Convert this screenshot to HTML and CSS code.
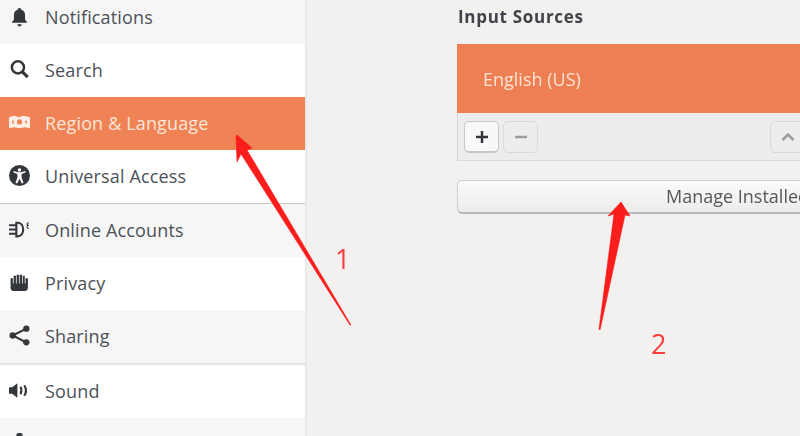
FILE: index.html
```html
<!DOCTYPE html>
<html lang="en">
<head>
<meta charset="utf-8">
<title>Region &amp; Language</title>
<link rel="stylesheet" href="styles.css">
</head>
<body>
<div class="window">
  <nav class="sidebar">
    <div class="row first alt">
      <svg class="icon" viewBox="0 0 20 20"><path d="M10 1c.9 0 1.500.6 1.500 1.400 2.900.8 3.800 3 3.800 5.800v3.800l2.200 3H2.500l2.200-3V8.200c0-2.800.9-5 3.800-5.800C8.500 1.600 9.100 1 10 1zM8 16.500h4c0 1.300-.9 2-2 2s-2-.7-2-2z"/></svg>
      <span>Notifications</span>
    </div>
    <div class="row">
      <svg class="icon" viewBox="0 0 20 20"><circle class="line thickish" cx="8.500" cy="8" r="5.800"/><path class="line thick" d="M12.800 12.300l5 5"/></svg>
      <span>Search</span>
    </div>
    <div class="row active">
      <svg class="icon" viewBox="0 0 20 20"><path class="flag" fill-rule="evenodd" d="M0 5l5-1.500 4 1.500 5-1.500L20 5v10.500l-5-1-5 1-5-1-5 1zM7.500 9.500a2.500 2.500 0 1 0 5 0 2.500 2.500 0 1 0-5 0zM3 8v3h1.500V8zM15.500 8v3H17V8z"/></svg>
      <span>Region &amp; Language</span>
    </div>
    <div class="row">
      <svg class="icon" viewBox="0 0 20 20"><path fill-rule="evenodd" d="M10 0a10 10 0 1 1 0 20 10 10 0 0 1 0-20zM10 3a1.700 1.700 0 1 0 0 3.400A1.700 1.700 0 0 0 10 3zM4 7l4 1.500V12l-1.800 5 1.600.5L10 13l2.200 4.500 1.600-.5L12 12V8.500L16 7l-.5-1.300-4 1.300h-3l-4-1.300z"/></svg>
      <span>Universal Access</span>
    </div>
    <div class="divider"></div>
    <div class="row alt">
      <svg class="icon" viewBox="0 0 20 20"><path class="line" d="M0 6h6M0 10h6M0 14h6M7 3.500h1c3.500 0 5.500 3 5.500 6.500s-2 6.500-5.500 6.500H7zM14 10h-1"/><path class="line thin" d="M19 3.500c-2.500 0-2.500 2.500 0 2.500M19 9c-2.500 0-2.500-3 0-3"/></svg>
      <span>Online Accounts</span>
    </div>
    <div class="row">
      <svg class="icon" viewBox="0 0 20 20"><path d="M1.500 6h2.200v5h.7V3.500h2.200V11h.7V2.500h2.200V11h.7V2.500h2.200V11h.7V3.500H15V11h.7V6H18v9c0 1.800-1 3-3 3H4.500c-2 0-3-1.200-3-3z"/></svg>
      <span>Privacy</span>
    </div>
    <div class="row alt">
      <svg class="icon" viewBox="0 0 20 20"><path class="line" d="M16.500 3.500L3.500 10l13 6.500"/><circle cx="16.500" cy="3.500" r="3"/><circle cx="3.500" cy="10" r="3"/><circle cx="16.500" cy="16.500" r="3"/></svg>
      <span>Sharing</span>
    </div>
    <div class="divider thick-divider"></div>
    <div class="row">
      <svg class="icon" viewBox="0 0 20 20"><path d="M0 7h3l5-4v14l-5-4H0z"/><path class="line" d="M11 6.500c1.200 2.300 1.200 4.700 0 7M14.500 5c2 3 2 7 0 10"/></svg>
      <span>Sound</span>
    </div>
    <div class="row alt last">
      <svg class="icon" viewBox="0 0 20 20"><rect x="7" y="1" width="6" height="18" rx="2"/></svg>
    </div>
  </nav>
  <main class="content">
    <h2 class="heading">Input Sources</h2>
    <div class="sources">
      <div class="source">English (US)</div>
      <div class="toolbar">
        <button class="tool raised"><svg viewBox="0 0 14 14"><path d="M7 1v12M1 7h12"/></svg></button>
        <button class="tool"><svg viewBox="0 0 14 14"><path class="muted" d="M1 7h12"/></svg></button>
        <button class="tool up"><svg viewBox="0 0 14 14"><path class="muted" d="M1.500 10L7 4.500l5.500 5.500"/></svg></button>
      </div>
    </div>
    <button class="manage">Manage Installed Languages</button>
  </main>
</div>
<svg class="notes" viewBox="0 0 800 436">
  <path d="M236 136l1-1 15 13-5 2 104 175-1 0-109-171-4 8z"/>
  <path d="M621 202l9 14-5-1-25 115-1-1 15-115-6 2z"/>
  <text x="335" y="269">1</text>
  <text x="651" y="354">2</text>
</svg>
</body>
</html>
```
FILE: styles.css
```css
* { box-sizing: border-box; }
html, body { margin: 0; padding: 0; width: 800px; height: 436px; overflow: hidden; background: #f2f1f0; }
body { position: relative; font-family: "Open Sans", "Noto Sans", sans-serif; }
.window { display: flex; width: 800px; height: 436px; overflow: hidden; filter: blur(0.7px); }
.sidebar { width: 307px; flex: none; background: #fff; border-right: 2px solid #ebe9e7; display: flex; flex-direction: column; height: 436px; overflow: hidden; }
.row { flex: none; height: 53px; display: flex; align-items: center; gap: 15px; padding: 0 0 2px 9px; font-size: 18px; letter-spacing: 0.15px; color: #4c5158; background: #fff; }
.row.alt { background: #f6f6f6; }
.row.first { height: 44px; padding-bottom: 10px; }
.row.last { height: 19px; align-items: flex-start; padding-top: 14px; }
.row.active { background: #f08355; color: #fde6da; }
.row span { white-space: nowrap; }
.icon { width: 21px; height: 21px; flex: none; fill: #33363a; overflow: visible; }
.line { fill: none; stroke: #33363a; stroke-width: 2; }
.thickish { stroke-width: 2.400; }
.thick { stroke-width: 3; }
.thin { stroke-width: 1; }
.flag { fill: #fdeee6; }
.divider { flex: none; height: 1px; background: #c9c9c9; }
.thick-divider { height: 2px; background: #e4e3e2; }
.content { flex: none; width: 493px; padding: 6px 0 0 150px; color: #3d4045; }
.heading { margin: 0 0 17px 1px; font-size: 17px; line-height: 21px; font-weight: 700; letter-spacing: 0.7px; color: #40444a; white-space: nowrap; }
.sources { width: 400px; height: 117px; border: 1px solid #dcdad8; border-top: 0; background: #eeeded; }
.source { height: 69px; margin: 0 -1px; background: #ee7f52; color: #fde3d6; font-size: 18px; line-height: 70px; padding-left: 26px; }
.toolbar { display: flex; gap: 4px; padding: 8px 0 0 6px; }
.tool { width: 35px; height: 32px; padding: 0; border: 1px solid #dbd9d7; border-radius: 5px; background: #eeeded; display: flex; align-items: center; justify-content: center; }
.tool.raised { background: #f8f8f8; border-color: #c8c6c4; border-bottom-width: 2px; }
.tool.up { margin-left: 228px; }
.tool svg { width: 14px; height: 14px; fill: none; stroke: #33363a; stroke-width: 2.500; }
.tool .muted { stroke: #9a9c9e; }
.manage { display: block; width: 400px; height: 34px; margin-top: 19px; border: 1px solid #cfcdcb; border-bottom: 2px solid #b9b7b5; border-radius: 5px; background: linear-gradient(#fbfbfb, #ececeb); font: 18px/28px "Open Sans", sans-serif; color: #55585c; text-align: left; padding: 0 0 2px 208px; white-space: nowrap; overflow: hidden; }
.notes { position: absolute; left: 0; top: 0; width: 800px; height: 436px; filter: blur(0.4px); }
.notes path { fill: #fb1c1c; stroke: #fb1c1c; stroke-width: 0.6; }
.notes text { font-family: "Open Sans", sans-serif; font-size: 27px; fill: #f8403f; }
```
